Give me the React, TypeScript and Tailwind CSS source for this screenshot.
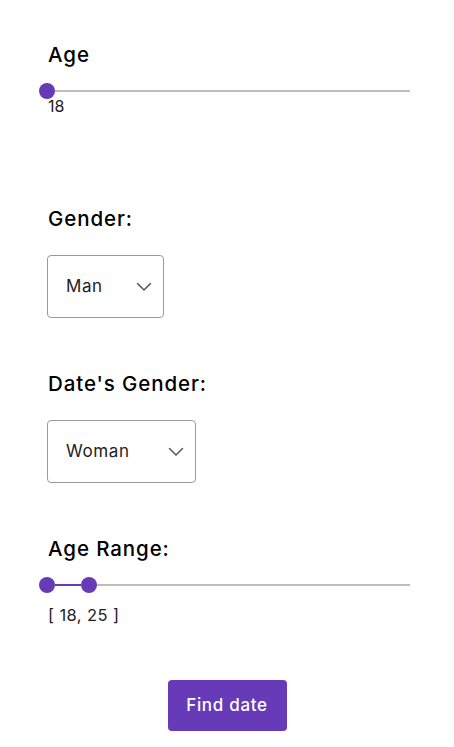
import React from "react";

function Chevron() {
  return (
    <svg width="16" height="10" viewBox="0 0 16 10" fill="none" className="shrink-0">
      <path d="M1.5 1.5 L8 8 L14.5 1.5" stroke="#555" strokeWidth="1.5" strokeLinecap="round" strokeLinejoin="round" />
    </svg>
  );
}

function Select({ value, width }: { value: string; width: string }) {
  return (
    <div className={`mt-[21px] h-[63px] ${width} rounded-[4px] border border-[#9a9a9a] flex items-center justify-between pl-[18px] pr-[11px] text-[17px] tracking-[0.6px] text-[#222]`}>
      <span>{value}</span>
      <Chevron />
    </div>
  );
}

function Thumb() {
  return <div className="w-[16px] h-[16px] rounded-full bg-[#673ab7] shrink-0" />;
}

function Title({ children, className }: { children: React.ReactNode; className: string }) {
  return (
    <div className={`text-[20.5px] font-medium leading-[30px] tracking-[0.9px] pl-[1px] ${className}`}>{children}</div>
  );
}

export default function App() {
  return (
    <div className="w-[454px] min-h-[747px] bg-white text-black pl-[47px] pr-[44px] pt-[40px]" style={{ fontFamily: "Inter, 'Noto Sans', sans-serif" }}>
      <Title className="">Age</Title>
      <div className="flex items-center h-[16px] mt-[13px] -ml-[8px]">
        <Thumb />
        <div className="flex-1 h-[2px] bg-[#bdbdbd]" />
      </div>
      <div className="text-[16px] leading-[20px] -mt-[3px] pl-[1px] text-[#222]">18</div>

      <Title className="mt-[88px]">Gender:</Title>
      <Select value="Man" width="w-[117px]" />

      <Title className="mt-[51px]">Date's Gender:</Title>
      <Select value="Woman" width="w-[149px]" />

      <Title className="mt-[51px]">Age Range:</Title>
      <div className="flex items-center h-[16px] mt-[13px] -ml-[8px]">
        <Thumb />
        <div className="w-[26px] h-[2px] bg-[#673ab7]" />
        <Thumb />
        <div className="flex-1 h-[2px] bg-[#bdbdbd]" />
      </div>
      <div className="text-[16.5px] leading-[24px] mt-[10px] pl-[1px] tracking-[0.4px] text-[#222]">[ 18, 25 ]</div>

      <div className="flex justify-center mt-[53px] pr-[3px]">
        <button className="w-[119px] h-[51px] rounded-[4px] bg-[#673ab7] text-white text-[17px] tracking-[0.7px] font-medium">Find date</button>
      </div>
    </div>
  );
}
